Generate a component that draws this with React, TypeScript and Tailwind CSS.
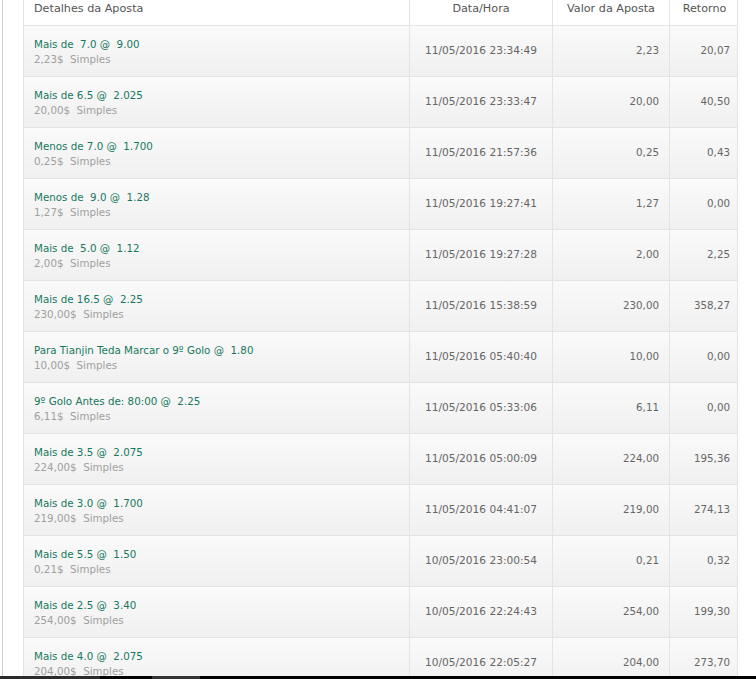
import React from "react";

type Bet = {
  label: string;
  stake: string;
  date: string;
  value: string;
  ret: string;
};

const bets: Bet[] = [
  { label: "Mais de\u00a0 7.0 @\u00a0 9.00", stake: "2,23$", date: "11/05/2016 23:34:49", value: "2,23", ret: "20,07" },
  { label: "Mais de 6.5 @\u00a0 2.025", stake: "20,00$", date: "11/05/2016 23:33:47", value: "20,00", ret: "40,50" },
  { label: "Menos de 7.0 @\u00a0 1.700", stake: "0,25$", date: "11/05/2016 21:57:36", value: "0,25", ret: "0,43" },
  { label: "Menos de\u00a0 9.0 @\u00a0 1.28", stake: "1,27$", date: "11/05/2016 19:27:41", value: "1,27", ret: "0,00" },
  { label: "Mais de\u00a0 5.0 @\u00a0 1.12", stake: "2,00$", date: "11/05/2016 19:27:28", value: "2,00", ret: "2,25" },
  { label: "Mais de 16.5 @\u00a0 2.25", stake: "230,00$", date: "11/05/2016 15:38:59", value: "230,00", ret: "358,27" },
  { label: "Para Tianjin Teda Marcar o 9º Golo @\u00a0 1.80", stake: "10,00$", date: "11/05/2016 05:40:40", value: "10,00", ret: "0,00" },
  { label: "9º Golo Antes de: 80:00 @\u00a0 2.25", stake: "6,11$", date: "11/05/2016 05:33:06", value: "6,11", ret: "0,00" },
  { label: "Mais de 3.5 @\u00a0 2.075", stake: "224,00$", date: "11/05/2016 05:00:09", value: "224,00", ret: "195,36" },
  { label: "Mais de 3.0 @\u00a0 1.700", stake: "219,00$", date: "11/05/2016 04:41:07", value: "219,00", ret: "274,13" },
  { label: "Mais de 5.5 @\u00a0 1.50", stake: "0,21$", date: "10/05/2016 23:00:54", value: "0,21", ret: "0,32" },
  { label: "Mais de 2.5 @\u00a0 3.40", stake: "254,00$", date: "10/05/2016 22:24:43", value: "254,00", ret: "199,30" },
  { label: "Mais de 4.0 @\u00a0 2.075", stake: "204,00$", date: "10/05/2016 22:05:27", value: "204,00", ret: "273,70" },
];

function BetRow({ bet }: { bet: Bet }) {
  return (
    <div className="grid grid-cols-[386px_143px_117px_69px] h-[51px] border-b border-[#e4e4e4] bg-gradient-to-b from-[#fafafa] to-[#f0f0f0]">
      <div className="flex flex-col justify-center pl-[10px] pt-[2px] border-r border-[#e4e4e4]">
        <div className="text-[#17775f] leading-[15px] whitespace-pre">{bet.label}</div>
        <div className="text-[#a0a0a0] leading-[15px] whitespace-pre">{bet.stake}{"\u00a0 "}Simples</div>
      </div>
      <div className="flex items-center justify-center border-r border-[#e4e4e4] text-[#666] text-[10.6px]">{bet.date}</div>
      <div className="flex items-center justify-end pr-[10px] border-r border-[#e4e4e4] text-[#666]">{bet.value}</div>
      <div className="flex items-center justify-end pr-[9px] text-[#666]">{bet.ret}</div>
    </div>
  );
}

export default function App() {
  return (
    <div className="relative w-[756px] h-[679px] overflow-hidden bg-white font-['DejaVu_Sans',Verdana,sans-serif] text-[10.3px]">
      <div className="flex h-full">
        <div className="w-[2px] shrink-0" />
        <div className="w-px shrink-0 bg-[#cfcfcf]" />
        <div className="w-[20px] shrink-0" />
        <div className="w-[715px] shrink-0 border-l border-r border-[#e4e4e4]">
          <div className="grid grid-cols-[386px_143px_117px_69px] h-[26px] border-b border-[#e4e4e4] bg-white text-[11.2px] text-[#555] leading-[17px]">
            <div className="pl-[10px] border-r border-[#e4e4e4]">Detalhes da Aposta</div>
            <div className="text-center border-r border-[#e4e4e4]">Data/Hora</div>
            <div className="text-center border-r border-[#e4e4e4]">Valor da Aposta</div>
            <div className="text-center">Retorno</div>
          </div>
          {bets.map((b) => (
            <BetRow key={b.date} bet={b} />
          ))}
        </div>
      </div>
      {/* taskbar edge at the bottom of the capture */}
      <div className="absolute left-0 right-0 bottom-0 h-[3px] flex bg-black">
        <div className="w-[100px] bg-[#2b2b2b]" />
        <div className="w-[52px]" />
        <div className="w-[48px] bg-[#333]" />
      </div>
    </div>
  );
}
